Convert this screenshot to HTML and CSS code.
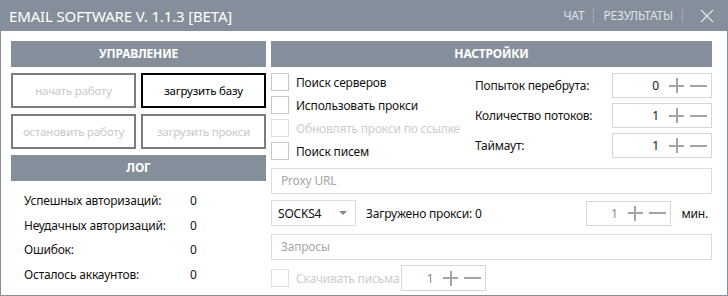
FILE: index.html
```html
<!DOCTYPE html>
<html lang="ru">
<head>
    <meta charset="UTF-8">
    <title>Email Software</title>
    <link rel="stylesheet" href="styles.css">
</head>
<body>
    <div class="window">
        <div class="titlebar">
            <div class="title">EMAIL SOFTWARE V. 1.1.3 [BETA]</div>
            <div class="menu">
                <span class="menu-item">ЧАТ</span>
                <span class="sep"></span>
                <span class="menu-item">РЕЗУЛЬТАТЫ</span>
                <span class="sep"></span>
                <svg class="close" width="14" height="14" viewBox="0 0 14 14">
                    <path d="M1 1 L13 13 M13 1 L1 13" stroke="#e4e8ec" stroke-width="1.1" fill="none"/>
                </svg>
            </div>
        </div>
        <div class="main">
            <div class="left">
                <div class="section-head">УПРАВЛЕНИЕ</div>
                <div class="buttons">
                    <div class="btn disabled">начать работу</div>
                    <div class="btn active">загрузить базу</div>
                    <div class="btn disabled">остановить работу</div>
                    <div class="btn disabled">загрузить прокси</div>
                </div>
                <div class="section-head">ЛОГ</div>
                <div class="log">
                    <div class="log-row"><span>Успешных авторизаций:</span><span>0</span></div>
                    <div class="log-row"><span>Неудачных авторизаций:</span><span>0</span></div>
                    <div class="log-row"><span>Ошибок:</span><span>0</span></div>
                    <div class="log-row"><span>Осталось аккаунтов:</span><span>0</span></div>
                </div>
            </div>
            <div class="right">
                <div class="section-head">НАСТРОЙКИ</div>
                <div class="settings">
                    <div class="checks">
                        <label class="check"><span class="box"></span>Поиск серверов</label>
                        <label class="check"><span class="box"></span>Использовать прокси</label>
                        <label class="check off"><span class="box"></span>Обновлять прокси по ссылке</label>
                        <label class="check"><span class="box"></span>Поиск писем</label>
                    </div>
                    <div class="params">
                        <div class="param">
                            <span>Попыток перебрута:</span>
                            <div class="spin wide"><span class="num">0</span><span class="plus"></span><span class="minus"></span></div>
                        </div>
                        <div class="param">
                            <span>Количество потоков:</span>
                            <div class="spin wide"><span class="num">1</span><span class="plus"></span><span class="minus"></span></div>
                        </div>
                        <div class="param">
                            <span>Таймаут:</span>
                            <div class="spin wide"><span class="num">1</span><span class="plus"></span><span class="minus"></span></div>
                        </div>
                    </div>
                </div>
                <div class="field">Proxy URL</div>
                <div class="proxy-row">
                    <div class="select">SOCKS4<span class="arrow"></span></div>
                    <span class="loaded">Загружено прокси: 0</span>
                    <div class="spin"><span class="num">1</span><span class="plus"></span><span class="minus"></span></div>
                    <span class="unit">мин.</span>
                </div>
                <div class="field">Запросы</div>
                <div class="download-row">
                    <label class="check off"><span class="box"></span>Скачивать письма</label>
                    <div class="spin"><span class="num">1</span><span class="plus"></span><span class="minus"></span></div>
                </div>
            </div>
        </div>
    </div>
</body>
</html>
```

FILE: styles.css
```css
body {
    margin: 0;
    font-family: "Noto Sans", "Open Sans", sans-serif;
    font-size: 12px;
    letter-spacing: -0.2px;
    color: #111;
    background: #fff;
}
.window {
    width: 728px;
    height: 296px;
    box-sizing: border-box;
    border: 1px solid #858f9b;
    border-top: none;
    display: flex;
    flex-direction: column;
}
.titlebar {
    height: 31px;
    margin: 0 -1px;
    background: #858f9b;
    display: flex;
    align-items: center;
    justify-content: space-between;
    padding: 0 14px 0 9px;
    color: #fff;
}
.title {
    font-size: 15px;
    letter-spacing: -0.15px;
}
.menu {
    display: flex;
    align-items: center;
    color: #dfe3e8;
    font-size: 12px;
}
.sep {
    width: 0;
    height: 14px;
    border-left: 1px dotted #b6bdc5;
    margin: 0 9px;
}
.close {
    margin-left: 8px;
}
.main {
    display: grid;
    grid-template-columns: 255px 441px;
    column-gap: 5px;
    padding: 10px 0 0 10px;
}
.section-head {
    height: 26px;
    line-height: 26px;
    background: #858f9b;
    color: #fff;
    font-weight: bold;
    text-align: center;
    font-size: 12px;
}
.buttons {
    display: grid;
    grid-template-columns: 125px 125px;
    gap: 6px 5px;
    margin: 6px 0;
}
.btn {
    height: 35px;
    box-sizing: border-box;
    border: 2px solid #7c7c7c;
    display: flex;
    align-items: center;
    justify-content: center;
    font-size: 11.5px;
}
.btn.disabled {
    color: #c8c8c8;
}
.btn.active {
    border-color: #000;
    color: #000;
}
.log {
    padding: 7px 0 0 13px;
}
.log-row {
    display: flex;
    height: 24.7px;
    align-items: center;
}
.log-row span:first-child {
    width: 166px;
}
.settings {
    display: flex;
    justify-content: space-between;
    padding-top: 6px;
}
.checks {
    display: flex;
    flex-direction: column;
    gap: 5px;
}
.check {
    display: flex;
    align-items: center;
    height: 18px;
}
.check .box {
    width: 16px;
    height: 16px;
    border: 1px solid #c6c6c6;
    margin-right: 7px;
}
.check.off {
    color: #cdcdcd;
}
.check.off .box {
    border-color: #e0e0e0;
}
.params {
    display: flex;
    flex-direction: column;
    gap: 5px;
}
.param {
    display: grid;
    grid-template-columns: 137px 100px;
    align-items: center;
}
.spin {
    height: 25px;
    width: 85px;
    box-sizing: border-box;
    border: 1px solid #d6d6d6;
    display: flex;
    align-items: center;
    justify-content: flex-end;
    padding-right: 4px;
}
.spin.wide {
    width: 100px;
}
.num {
    margin-right: 10px;
}
.plus {
    position: relative;
    width: 15px;
    height: 15px;
    margin-right: 6px;
}
.plus::before,
.plus::after,
.minus::before {
    content: '';
    position: absolute;
    background: #a4a4a4;
}
.plus::before {
    left: 0;
    right: 0;
    top: 6.5px;
    height: 2px;
}
.plus::after {
    top: 0;
    bottom: 0;
    left: 6.5px;
    width: 2px;
}
.minus {
    position: relative;
    width: 17px;
    height: 15px;
}
.minus::before {
    left: 0;
    right: 0;
    top: 6.5px;
    height: 2px;
}
.field {
    height: 26px;
    box-sizing: border-box;
    border: 1px solid #dcdcdc;
    margin-top: 8px;
    padding-left: 9px;
    line-height: 24px;
    color: #a8a8a8;
}
.proxy-row {
    display: flex;
    align-items: center;
    margin-top: 6px;
}
.select {
    width: 85px;
    height: 26px;
    box-sizing: border-box;
    border: 1px solid #dcdcdc;
    display: flex;
    align-items: center;
    justify-content: space-between;
    padding: 0 8px 0 6px;
}
.arrow {
    width: 0;
    height: 0;
    border-left: 4px solid transparent;
    border-right: 4px solid transparent;
    border-top: 4px solid #8a8a8a;
}
.loaded {
    margin-left: 10px;
    flex: 1;
}
.unit {
    margin: 0 4px 0 11px;
}
.proxy-row .spin .num,
.download-row .spin .num {
    color: #8a8a8a;
}
.download-row {
    display: flex;
    align-items: center;
    margin-top: 5px;
}
.download-row .check {
    margin-right: 2px;
}
.download-row .spin {
    height: 26px;
}
```
